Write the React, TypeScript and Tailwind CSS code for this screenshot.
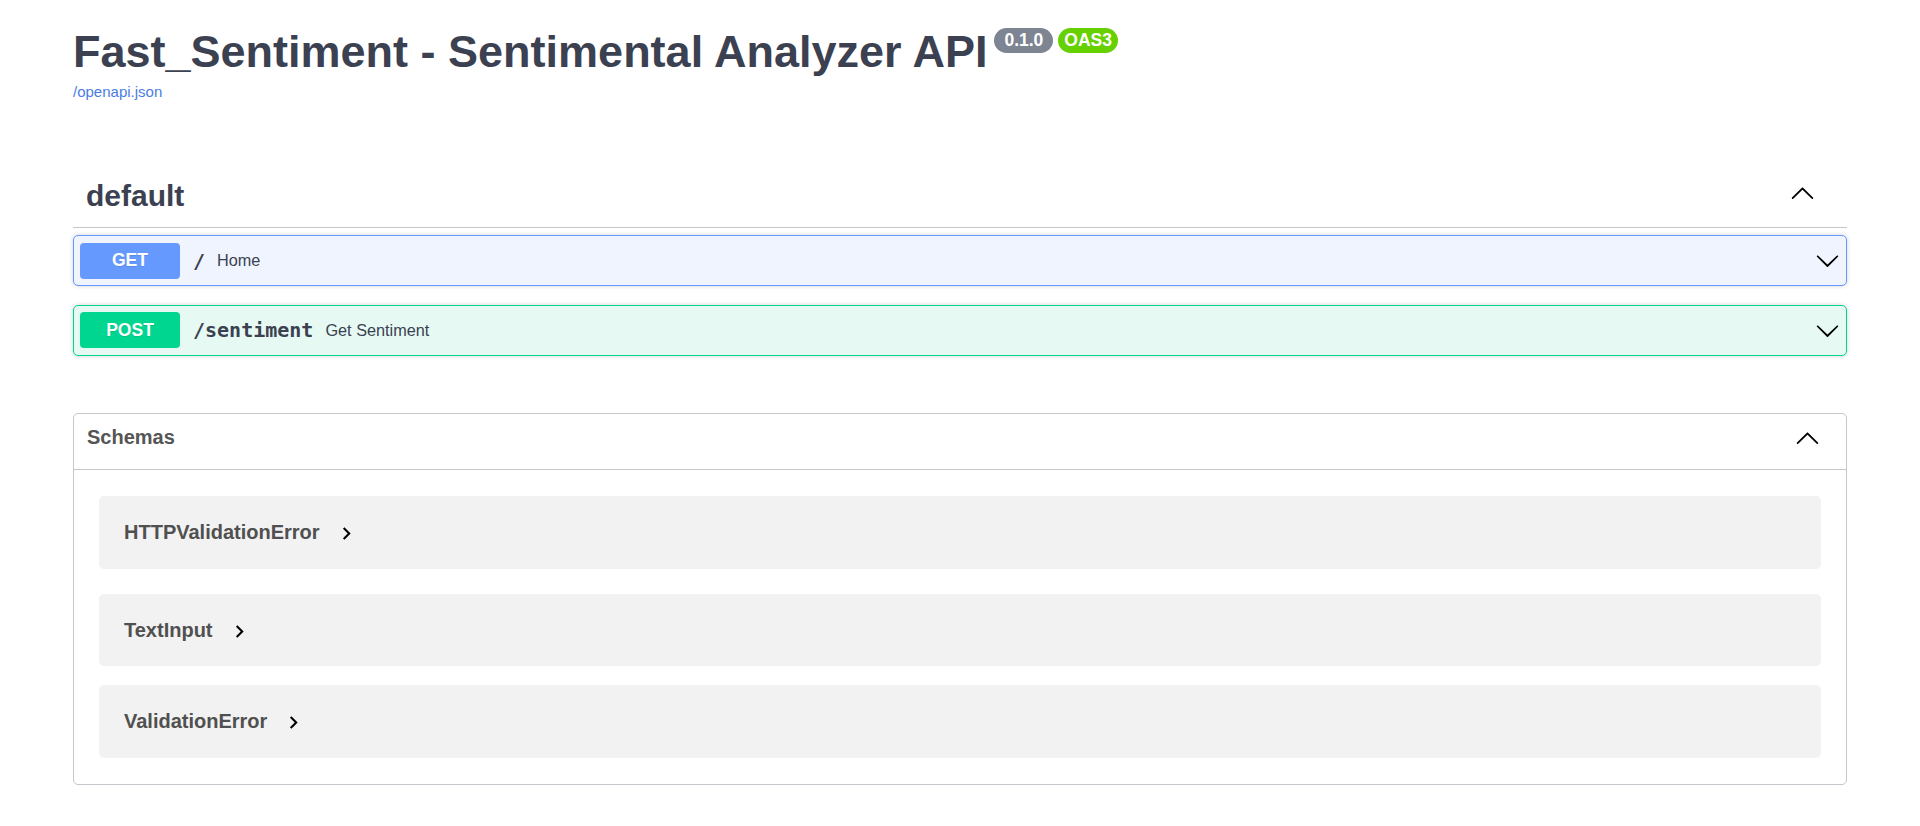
import React from 'react';

const SANS = { fontFamily: '"Liberation Sans", Arial, sans-serif' };
const MONO = { fontFamily: '"DejaVu Sans Mono", monospace' };

const ArrowDown = () => (
  <svg width="25" height="25" viewBox="0 0 20 20" className="shrink-0">
    <path
      fill="#000"
      d="M17.418 6.109c.272-.268.709-.268.979 0s.271.701 0 .969l-7.908 7.83c-.27.268-.707.268-.979 0l-7.908-7.83c-.27-.268-.27-.701 0-.969.271-.268.709-.268.979 0L10 13.25l7.418-7.141z"
    />
  </svg>
);

const ArrowUp = ({ className = '' }: { className?: string }) => (
  <svg width="25" height="25" viewBox="0 0 20 20" className={`shrink-0 ${className}`}>
    <path
      fill="#000"
      d="M17.418 14.908c.272.268.709.268.979 0s.271-.701 0-.969l-7.908-7.83c-.27-.268-.707-.268-.979 0l-7.908 7.83c-.27.268-.27.701 0 .969.271.268.709.268.979 0L10 7.767l7.418 7.141z"
    />
  </svg>
);

const ModelToggle = () => (
  <svg width="25" height="25" viewBox="0 0 24 24" className="shrink-0 ml-[14px] mt-[3px]">
    <path fill="#000" d="M10 6 8.59 7.41 13.17 12l-4.58 4.59L10 18l6-6z" />
  </svg>
);

type Op = {
  method: string;
  path: string;
  summary: string;
  badge: string;
  border: string;
  bg: string;
};

const ops: Op[] = [
  { method: 'GET', path: '/', summary: 'Home', badge: 'bg-[#6699fe]', border: 'border-[#6699fe]', bg: 'bg-[#eff4ff]' },
  { method: 'POST', path: '/sentiment', summary: 'Get Sentiment', badge: 'bg-[#00d68f]', border: 'border-[#00d68f]', bg: 'bg-[#e6faf3]' },
];

const schemas = [
  { name: 'HTTPValidationError', mt: 'mt-[26.5px]' },
  { name: 'TextInput', mt: 'mt-[25px]' },
  { name: 'ValidationError', mt: 'mt-[19px]' },
];

export default function App() {
  return (
    <div className="min-h-screen w-full bg-white px-[73px] pt-[26px] pb-[40px] text-[#3b4151]" style={SANS}>
      {/* info */}
      <div className="flex items-start">
        <h2 className="text-[45px] leading-[52px] font-bold text-[#3b4151] whitespace-nowrap">
          Fast_Sentiment - Sentimental Analyzer API
        </h2>
        <span className="ml-[7px] mt-[2px] h-[25px] px-[10px] rounded-full bg-[#7d8492] text-white font-bold text-[17.5px] leading-[25px]">
          0.1.0
        </span>
        <span className="ml-[5px] mt-[2px] h-[25px] px-[6px] rounded-full bg-[#66d000] text-white font-bold text-[17.5px] leading-[25px]">
          OAS3
        </span>
      </div>
      <a className="block mt-[5px] text-[15px] leading-[18px] text-[#4a7de2]" href="#">
        /openapi.json
      </a>

      {/* default tag */}
      <div className="mt-[63px] h-[64px] flex items-center justify-between border-b border-[#c4c6cb] pl-[13px] pr-[32px]">
        <span className="text-[30px] leading-[34px] font-bold text-[#3b4151]">default</span>
        <ArrowUp className="mb-[6px]" />
      </div>

      <div className="mt-[7px]">
        {ops.map((op, i) => (
          <div
            key={op.method}
            className={`flex items-center border rounded-[5px] px-[6px] py-[6.5px] shadow-[0_0_4px_rgba(0,0,0,0.19)] ${op.border} ${op.bg} ${i > 0 ? 'mt-[18.5px]' : ''}`}
          >
            <div
              className={`w-[100px] h-[36px] rounded-[4px] flex items-center justify-center text-white font-bold text-[17.5px] [text-shadow:0_1px_0_rgba(0,0,0,0.1)] ${op.badge}`}
            >
              {op.method}
            </div>
            <span className="ml-[13px] text-[20px] font-bold text-[#3b4151]" style={MONO}>
              {op.path}
            </span>
            <span className="ml-[12px] text-[16.25px] text-[#3b4151]">{op.summary}</span>
            <div className="ml-auto">
              <ArrowDown />
            </div>
          </div>
        ))}
      </div>

      {/* schemas */}
      <div className="mt-[57px] border border-[#c4c6cb] rounded-[5px] pb-[26px]">
        <div className="h-[56px] flex items-center justify-between border-b border-[#c4c6cb] pl-[13px] pr-[26px] pb-[8px]">
          <span className="text-[20px] leading-[24px] font-bold text-[#555555]">Schemas</span>
          <ArrowUp />
        </div>
        {schemas.map((s) => (
          <div
            key={s.name}
            className={`mx-[25px] h-[72.5px] rounded-[5px] bg-[#f2f2f2] flex items-center pl-[25px] ${s.mt}`}
          >
            <span className="text-[20px] leading-[24px] font-bold text-[#505050]">{s.name}</span>
            <ModelToggle />
          </div>
        ))}
      </div>
    </div>
  );
}
